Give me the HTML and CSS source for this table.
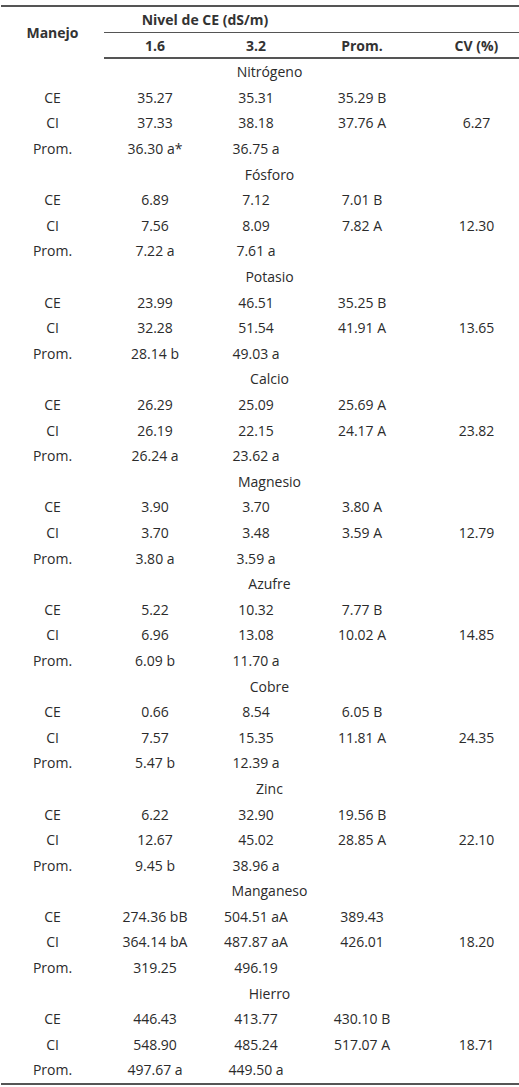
FILE: index.html
```html
<!DOCTYPE html>
<html lang="es">
<head>
<meta charset="utf-8">
<link rel="stylesheet" href="styles.css">
</head>
<body>
<table class="tbl">
  <colgroup>
    <col class="c1"><col class="c2"><col class="c3"><col class="c4"><col class="c5">
  </colgroup>
  <thead>
    <tr class="h1">
      <th rowspan="2" class="manejo">Manejo</th>
      <th colspan="2" class="nivel">Nivel de CE (dS/m)</th>
      <th class="blank"></th>
      <th class="blank"></th>
    </tr>
    <tr class="h2">
      <th>1.6</th><th>3.2</th><th>Prom.</th><th class="cv">CV (%)</th>
    </tr>
  </thead>
  <tbody>
    <tr class="sec"><td colspan="5">Nitrógeno</td></tr>
    <tr><td>CE</td><td>35.27</td><td>35.31</td><td>35.29 B</td><td class="cv"></td></tr>
    <tr><td>CI</td><td>37.33</td><td>38.18</td><td>37.76 A</td><td class="cv">6.27</td></tr>
    <tr><td>Prom.</td><td>36.30 a*</td><td>36.75 a</td><td></td><td class="cv"></td></tr>

    <tr class="sec"><td colspan="5">Fósforo</td></tr>
    <tr><td>CE</td><td>6.89</td><td>7.12</td><td>7.01 B</td><td class="cv"></td></tr>
    <tr><td>CI</td><td>7.56</td><td>8.09</td><td>7.82 A</td><td class="cv">12.30</td></tr>
    <tr><td>Prom.</td><td>7.22 a</td><td>7.61 a</td><td></td><td class="cv"></td></tr>

    <tr class="sec"><td colspan="5">Potasio</td></tr>
    <tr><td>CE</td><td>23.99</td><td>46.51</td><td>35.25 B</td><td class="cv"></td></tr>
    <tr><td>CI</td><td>32.28</td><td>51.54</td><td>41.91 A</td><td class="cv">13.65</td></tr>
    <tr><td>Prom.</td><td>28.14 b</td><td>49.03 a</td><td></td><td class="cv"></td></tr>

    <tr class="sec"><td colspan="5">Calcio</td></tr>
    <tr><td>CE</td><td>26.29</td><td>25.09</td><td>25.69 A</td><td class="cv"></td></tr>
    <tr><td>CI</td><td>26.19</td><td>22.15</td><td>24.17 A</td><td class="cv">23.82</td></tr>
    <tr><td>Prom.</td><td>26.24 a</td><td>23.62 a</td><td></td><td class="cv"></td></tr>

    <tr class="sec"><td colspan="5">Magnesio</td></tr>
    <tr><td>CE</td><td>3.90</td><td>3.70</td><td>3.80 A</td><td class="cv"></td></tr>
    <tr><td>CI</td><td>3.70</td><td>3.48</td><td>3.59 A</td><td class="cv">12.79</td></tr>
    <tr><td>Prom.</td><td>3.80 a</td><td>3.59 a</td><td></td><td class="cv"></td></tr>

    <tr class="sec"><td colspan="5">Azufre</td></tr>
    <tr><td>CE</td><td>5.22</td><td>10.32</td><td>7.77 B</td><td class="cv"></td></tr>
    <tr><td>CI</td><td>6.96</td><td>13.08</td><td>10.02 A</td><td class="cv">14.85</td></tr>
    <tr><td>Prom.</td><td>6.09 b</td><td>11.70 a</td><td></td><td class="cv"></td></tr>

    <tr class="sec"><td colspan="5">Cobre</td></tr>
    <tr><td>CE</td><td>0.66</td><td>8.54</td><td>6.05 B</td><td class="cv"></td></tr>
    <tr><td>CI</td><td>7.57</td><td>15.35</td><td>11.81 A</td><td class="cv">24.35</td></tr>
    <tr><td>Prom.</td><td>5.47 b</td><td>12.39 a</td><td></td><td class="cv"></td></tr>

    <tr class="sec"><td colspan="5">Zinc</td></tr>
    <tr><td>CE</td><td>6.22</td><td>32.90</td><td>19.56 B</td><td class="cv"></td></tr>
    <tr><td>CI</td><td>12.67</td><td>45.02</td><td>28.85 A</td><td class="cv">22.10</td></tr>
    <tr><td>Prom.</td><td>9.45 b</td><td>38.96 a</td><td></td><td class="cv"></td></tr>

    <tr class="sec"><td colspan="5">Manganeso</td></tr>
    <tr><td>CE</td><td>274.36 bB</td><td>504.51 aA</td><td>389.43</td><td class="cv"></td></tr>
    <tr><td>CI</td><td>364.14 bA</td><td>487.87 aA</td><td>426.01</td><td class="cv">18.20</td></tr>
    <tr><td>Prom.</td><td>319.25</td><td>496.19</td><td></td><td class="cv"></td></tr>

    <tr class="sec"><td colspan="5">Hierro</td></tr>
    <tr><td>CE</td><td>446.43</td><td>413.77</td><td>430.10 B</td><td class="cv"></td></tr>
    <tr><td>CI</td><td>548.90</td><td>485.24</td><td>517.07 A</td><td class="cv">18.71</td></tr>
    <tr class="last"><td>Prom.</td><td>497.67 a</td><td>449.50 a</td><td></td><td class="cv"></td></tr>
  </tbody>
</table>
</body>
</html>
```

FILE: styles.css
```css
html, body {
  margin: 0;
  padding: 0;
  background: #ffffff;
}

body {
  font-family: "Open Sans", "DejaVu Sans", sans-serif;
  font-size: 14px;
  color: #2b2b2b;
}

.tbl {
  margin-top: 5px;
  margin-left: 1px;
  width: 518px;
  border-collapse: collapse;
  table-layout: fixed;
  border-top: 2px solid #555555;
  border-bottom: 2px solid #555555;
}

.c1 { width: 103px; }
.c2 { width: 102px; }
.c3 { width: 100px; }
.c4 { width: 112px; }
.c5 { width: 101px; }

.tbl th,
.tbl td {
  padding: 0;
  text-align: center;
  white-space: nowrap;
  vertical-align: middle;
}

.tbl th {
  font-weight: 700;
  color: #333333;
}

.h1 th {
  height: 25px;
}

.h1 .nivel,
.h1 .blank {
  border-bottom: 1px solid #555555;
}

.h2 th {
  height: 24px;
  border-bottom: 2px solid #555555;
}

.tbl .cv {
  padding-left: 16px;
}

.tbl td {
  height: 25.6px;
}

.sec td {
  padding-left: 19px;
}
```
